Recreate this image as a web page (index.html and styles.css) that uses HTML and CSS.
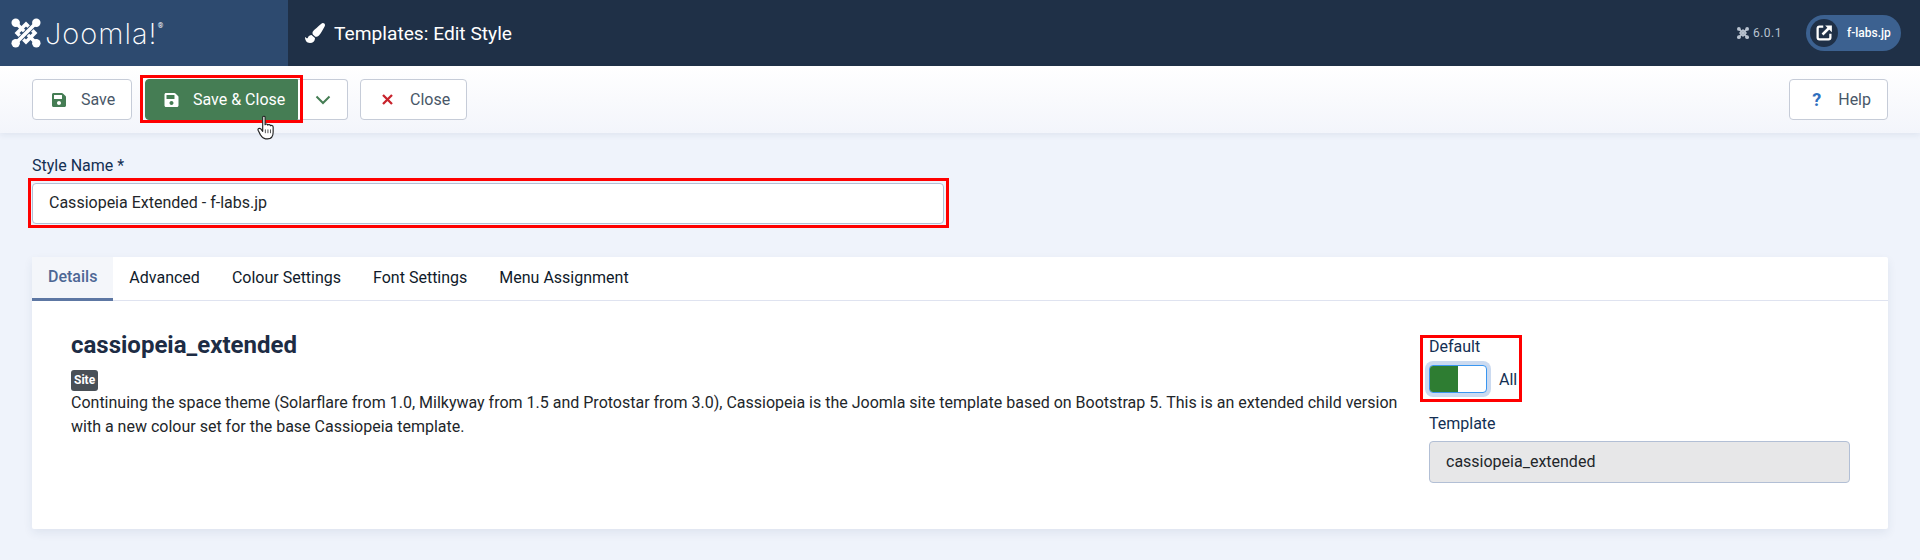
FILE: index.html
```html
<!DOCTYPE html>
<html lang="en">
  <head>
    <meta charset="utf-8">
    <title>Templates: Edit Style</title>
    <link rel="stylesheet" href="styles.css">
  </head>
  <body>
    <header class="topbar">
      <div class="brand">
        <svg class="brand-mark" viewBox="0 0 32 32">
          <g fill="none">
            <path class="arm" d="M16 6.500 L25.500 16 L16 25.500 L6.500 16 Z"/>
            <path class="arm" d="M5 5 L27 27"/>
            <path class="arm-gap" d="M27 5 L5 27"/>
            <path class="arm" d="M27 5 L5 27"/>
          </g>
          <g fill="#fff">
            <circle cx="5" cy="5" r="4.500"/>
            <circle cx="27" cy="5" r="4.500"/>
            <circle cx="5" cy="27" r="4.500"/>
            <circle cx="27" cy="27" r="4.500"/>
          </g>
        </svg>
        <span class="brand-name">Joomla!</span><sup class="brand-reg">®</sup>
      </div>
      <div class="page-title">
        <svg class="title-icon" viewBox="0 0 512 512"><path fill="#fff" d="M167.02 309.34c-40.12 2.58-76.53 17.86-97.19 72.3-2.35 6.21-8 9.98-14.59 9.98-11.11 0-45.46-27.67-55.25-34.35C0 439.62 37.93 512 128 512c75.86 0 128-43.77 128-120.19 0-3.11-.65-6.08-.97-9.13l-88.01-73.34zM457.89 0c-15.16 0-29.37 6.71-40.21 16.45C213.27 199.05 192 203.34 192 257.09c0 13.7 3.25 26.76 8.73 38.7l63.82 53.18c7.21 1.8 14.64 3.03 22.39 3.03 62.11 0 98.11-45.47 211.16-256.46 7.38-14.35 13.9-29.85 13.9-45.99C512 20.64 486 0 457.89 0z"/></svg>
        <h1>Templates: Edit Style</h1>
      </div>
      <div class="version">
        <svg class="version-icon" viewBox="0 0 32 32">
          <g fill="none" stroke="#b9c3d0" stroke-width="5">
            <path d="M5 5 L27 27"/>
            <path d="M27 5 L5 27"/>
            <path d="M8 16 L16 8 L24 16 L16 24 Z" stroke-width="4"/>
          </g>
          <g fill="#b9c3d0">
            <circle cx="5" cy="5" r="5"/>
            <circle cx="27" cy="5" r="5"/>
            <circle cx="5" cy="27" r="5"/>
            <circle cx="27" cy="27" r="5"/>
          </g>
        </svg>
        <span>6.0.1</span>
      </div>
      <a class="site-pill">
        <span class="site-icon">
          <svg viewBox="0 0 24 24">
            <path fill="none" stroke="#fff" stroke-width="3" d="M11 3.500H6A2.500 2.500 0 0 0 3.500 6v12A2.500 2.500 0 0 0 6 20.500h12a2.500 2.500 0 0 0 2.500-2.500v-5"/>
            <path fill="none" stroke="#fff" stroke-width="3.400" d="M10 14 L19 5"/>
            <path fill="#fff" d="M13.500 2H22.500V11Z"/>
          </svg>
        </span>
        <span>f-labs.jp</span>
      </a>
    </header>

    <div class="toolbar">
      <button class="btn btn-save"><svg class="icon save-green" viewBox="0 0 448 512"><path d="M433.941 129.941l-83.882-83.882A48 48 0 0 0 316.118 32H48C21.49 32 0 53.49 0 80v352c0 26.51 21.49 48 48 48h352c26.51 0 48-21.49 48-48V163.882a48 48 0 0 0-14.059-33.941zM224 416c-35.346 0-64-28.654-64-64 0-35.346 28.654-64 64-64s64 28.654 64 64c0 35.346-28.654 64-64 64zm96-304.520V212c0 6.627-5.373 12-12 12H76c-6.627 0-12-5.373-12-12V108c0-6.627 5.373-12 12-12h228.520c3.183 0 6.235 1.264 8.485 3.515l3.480 3.480A11.996 11.996 0 0 1 320 111.480z"/></svg>Save</button>
      <div class="btn-group">
        <button class="btn btn-primary"><svg class="icon save-white" viewBox="0 0 448 512"><path d="M433.941 129.941l-83.882-83.882A48 48 0 0 0 316.118 32H48C21.49 32 0 53.49 0 80v352c0 26.51 21.49 48 48 48h352c26.51 0 48-21.49 48-48V163.882a48 48 0 0 0-14.059-33.941zM224 416c-35.346 0-64-28.654-64-64 0-35.346 28.654-64 64-64s64 28.654 64 64c0 35.346-28.654 64-64 64zm96-304.520V212c0 6.627-5.373 12-12 12H76c-6.627 0-12-5.373-12-12V108c0-6.627 5.373-12 12-12h228.520c3.183 0 6.235 1.264 8.485 3.515l3.480 3.480A11.996 11.996 0 0 1 320 111.480z"/></svg>Save &amp; Close</button>
        <button class="btn btn-caret"><svg viewBox="0 0 16 10"><path d="M1.500 1.500 L8 8 L14.500 1.500" fill="none" stroke="#457d54" stroke-width="2"/></svg></button>
        <svg class="cursor" viewBox="0 0 20 26">
          <path fill="#fff" stroke="#222" stroke-width="1.200" stroke-linejoin="round" d="M6 2 C6 .8 8.500 .8 8.500 2 V10 C9 9 11 9 11.300 10.500 C12 9.500 14 9.700 14.200 11.200 C15 10.300 17 10.700 17 12.500 V18 C17 22 15 25 11 25 H9 C6 25 5 23 3.500 20.500 L1.200 16 C.5 14.500 2.500 13 4 14.500 L6 17 Z"/>
          <path fill="none" stroke="#222" stroke-width=".8" d="M8.800 15 V19 M11.500 15 V19 M14.200 15 V19"/>
        </svg>
      </div>
      <button class="btn btn-close"><svg class="icon times" viewBox="0 0 11 11"><path d="M1 1 L10 10 M10 1 L1 10" fill="none" stroke="#c8232c" stroke-width="2.300"/></svg>Close</button>
      <button class="btn btn-help"><span class="question">?</span>Help</button>
    </div>

    <main class="content">
      <label class="field-label">Style Name *</label>
      <div class="style-input">Cassiopeia Extended - f-labs.jp</div>

      <section class="panel">
        <nav class="tabs">
          <a class="tab active">Details</a>
          <a class="tab">Advanced</a>
          <a class="tab">Colour Settings</a>
          <a class="tab">Font Settings</a>
          <a class="tab">Menu Assignment</a>
        </nav>
        <div class="panel-body">
          <div class="info">
            <h2>cassiopeia_extended</h2>
            <span class="badge">Site</span>
            <p>Continuing the space theme (Solarflare from 1.0, Milkyway from 1.5 and Protostar from 3.0), Cassiopeia is the Joomla site template based on Bootstrap 5. This is an extended child version with a new colour set for the base Cassiopeia template.</p>
          </div>
          <aside class="side">
            <div class="default-box">
              <div class="side-label">Default</div>
              <div class="switch-row">
                <span class="switch"><span class="switch-on"></span></span>
                <span>All</span>
              </div>
            </div>
            <div class="side-label">Template</div>
            <div class="readonly">cassiopeia_extended</div>
          </aside>
        </div>
      </section>
    </main>
  </body>
</html>
```

FILE: styles.css
```css
html, body {
  margin: 0;
  height: 100%;
}
body {
  background: #eff3fb;
  color: #22262a;
  font-family: Roboto, sans-serif;
  font-size: 16px;
  overflow: hidden;
}

.topbar {
  display: flex;
  align-items: center;
  height: 66px;
  background: #1f3047;
  color: #fff;
}
.brand {
  display: flex;
  align-items: center;
  box-sizing: border-box;
  width: 288px;
  height: 100%;
  padding-left: 11px;
  background: #2d4a6f;
}
.brand-mark {
  width: 30px;
  height: 30px;
}
.arm {
  stroke: #fff;
  stroke-width: 3.800;
}
.arm-gap {
  stroke: #2d4a6f;
  stroke-width: 5.600;
}
.brand-name {
  margin-left: 4px;
  font-family: Inter, sans-serif;
  font-size: 29px;
  font-weight: 200;
  letter-spacing: 1px;
}
.brand-reg {
  align-self: flex-start;
  margin-top: 22px;
  font-size: 7px;
}
.page-title {
  display: flex;
  align-items: center;
  gap: 9px;
  margin-left: 17px;
  flex: 1;
}
.title-icon {
  width: 20px;
  height: 20px;
}
.page-title h1 {
  margin: 0;
  font-size: 19.200px;
  font-weight: 400;
}
.version {
  display: flex;
  align-items: center;
  gap: 4px;
  color: #b9c3d0;
  font-size: 12px;
  letter-spacing: .5px;
}
.version-icon {
  width: 12px;
  height: 12px;
}
.site-pill {
  display: flex;
  align-items: center;
  gap: 9px;
  box-sizing: border-box;
  width: 95px;
  height: 36px;
  margin: 0 19px 0 24px;
  padding-left: 4px;
  border-radius: 18px;
  background: #3c6190;
  font-size: 12px;
  font-weight: 500;
}
.site-icon {
  display: flex;
  align-items: center;
  justify-content: center;
  width: 28px;
  height: 28px;
  border-radius: 50%;
  background: #1f3047;
}
.site-icon svg {
  width: 18px;
  height: 18px;
}

.toolbar {
  display: flex;
  align-items: center;
  gap: 12px;
  box-sizing: border-box;
  height: 67px;
  padding: 0 32px;
  background: linear-gradient(#fff, #f3f5fb);
  box-shadow: 0 2px 6px rgba(40, 60, 100, .08);
}
.btn {
  display: inline-flex;
  align-items: center;
  box-sizing: border-box;
  height: 41px;
  padding: 0 16px 0 19px;
  border: 1px solid #c6ccd8;
  border-radius: 4px;
  background: #fff;
  color: #495768;
  font-family: inherit;
  font-size: 16px;
  white-space: nowrap;
}
.icon {
  flex: none;
  width: 14px;
  height: 16px;
  margin-right: 15px;
}
.save-green {
  fill: #457d54;
}
.save-white {
  fill: #fff;
}
.btn-save {
  width: 100px;
}
.btn-group {
  position: relative;
  display: flex;
  margin-left: 1px;
}
.btn-primary {
  position: relative;
  width: 153px;
  padding: 0 0 0 18px;
  border-color: #457d54;
  border-radius: 4px 0 0 4px;
  background: #457d54;
  color: #fff;
}
.btn-primary::after {
  content: "";
  position: absolute;
  inset: -5px -6px -4px -6px;
  border: 3px solid #f00;
}
.btn-primary .icon {
  width: 15px;
  margin-right: 14px;
}
.btn-caret {
  justify-content: center;
  width: 50px;
  padding: 0;
  border-left: 0;
  border-radius: 0 4px 4px 0;
}
.btn-caret svg {
  width: 16px;
  height: 10px;
}
.cursor {
  position: absolute;
  left: 112px;
  top: 36px;
  width: 19px;
  height: 25px;
}
.btn-close {
  padding-left: 21px;
}
.times {
  width: 11px;
  height: 11px;
  margin-right: 17px;
}
.btn-help {
  margin-left: auto;
  padding-left: 22px;
}
.question {
  margin-right: 17px;
  color: #2f6fbe;
  font-size: 18px;
  font-weight: 700;
}

.content {
  padding: 21px 32px 0;
}
.field-label {
  display: block;
  height: 24px;
  color: #132f53;
  line-height: 24px;
}
.style-input {
  position: relative;
  box-sizing: border-box;
  width: 912px;
  height: 41px;
  margin-top: 5px;
  padding: 0 16px;
  border: 1px solid #b2bfd5;
  border-radius: 4px;
  background: #fff;
  line-height: 38px;
}
.style-input::after {
  content: "";
  position: absolute;
  inset: -6px -6px -5px -5px;
  border: 3px solid #f00;
}
.panel {
  height: 272px;
  margin-top: 33px;
  background: #fff;
  border-radius: 2px;
  box-shadow: 0 4px 10px rgba(40, 60, 100, .08);
}
.tabs {
  display: flex;
  box-sizing: border-box;
  height: 44px;
  border-bottom: 1px solid #dfe3f0;
}
.tab {
  display: flex;
  align-items: center;
  padding: 0 16px 2px;
  color: #0f1a2a;
}
.tab.active {
  box-sizing: border-box;
  height: 44px;
  border-bottom: 3px solid #5d77a3;
  background: #f4f6fa;
  color: #4d6795;
  font-weight: 500;
}
.panel-body {
  display: flex;
  justify-content: space-between;
  padding: 30px 38px 0 39px;
}
.info {
  width: 1340px;
}
.info h2 {
  margin: 0 0 10px;
  color: #1d2c44;
  font-size: 24px;
  font-weight: 700;
  line-height: 29px;
}
.badge {
  display: block;
  width: fit-content;
  padding: 0 3px;
  border-radius: 3px;
  background: #495057;
  color: #fff;
  font-size: 12px;
  font-weight: 700;
  line-height: 21px;
}
.info p {
  margin: 0;
  font-size: 16px;
  line-height: 24px;
}
.side {
  width: 421px;
  margin-top: 4px;
  color: #132f53;
}
.default-box {
  position: relative;
  width: fit-content;
  margin-bottom: 19px;
}
.default-box::after {
  content: "";
  position: absolute;
  inset: 0 -5px -9px -9px;
  border: 3px solid #f00;
}
.side-label {
  line-height: 24px;
}
.switch-row {
  display: flex;
  align-items: center;
  gap: 12px;
  margin-top: 6px;
}
.switch {
  display: flex;
  box-sizing: border-box;
  width: 58px;
  height: 28px;
  border: 1px solid #3a96f0;
  border-radius: 4px;
  background: #fff;
  box-shadow: 0 0 0 4px #cbdaf0;
  overflow: hidden;
}
.switch-on {
  width: 50%;
  background: #2e7d32;
}
.readonly {
  box-sizing: border-box;
  height: 42px;
  margin-top: 5px;
  padding: 0 16px;
  border: 1px solid #b2bfd5;
  border-radius: 4px;
  background: #e7e7e8;
  color: #22262a;
  line-height: 40px;
}
```
